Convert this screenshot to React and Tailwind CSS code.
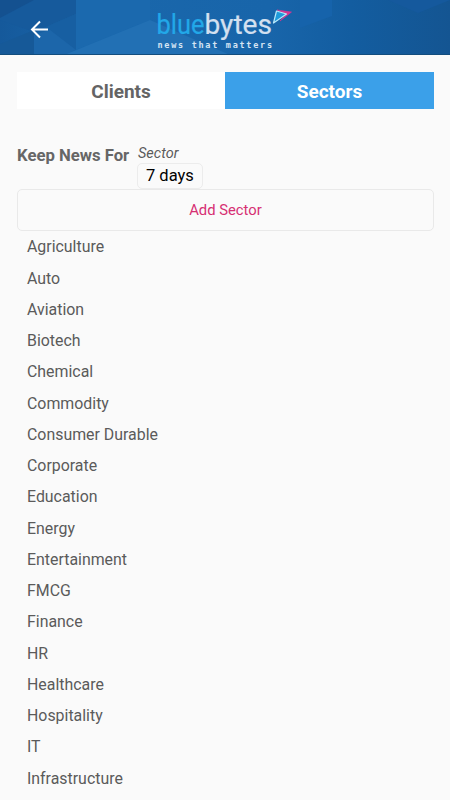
const sectors = [
  "Agriculture", "Auto", "Aviation", "Biotech", "Chemical", "Commodity",
  "Consumer Durable", "Corporate", "Education", "Energy", "Entertainment",
  "FMCG", "Finance", "HR", "Healthcare", "Hospitality", "IT", "Infrastructure",
];

function HeaderBackdrop() {
  return (
    <svg className="absolute inset-0 h-full w-full" viewBox="0 0 450 55" preserveAspectRatio="none" aria-hidden="true">
      <defs>
        <linearGradient id="base" x1="0" x2="1" y1="0" y2="0">
          <stop offset="0" stopColor="#15599b" />
          <stop offset="0.2" stopColor="#1a67ab" />
          <stop offset="0.6" stopColor="#1865aa" />
          <stop offset="0.78" stopColor="#135da0" />
          <stop offset="1" stopColor="#145592" />
        </linearGradient>
      </defs>
      <rect width="450" height="55" fill="url(#base)" />
      <path d="M0 0H76V14L34 32L0 20Z" fill="#165a9c" />
      <path d="M0 0H34L0 18Z" fill="#145190" />
      <path d="M34 32L76 14V50L33 55Z" fill="#175fa2" />
      <path d="M0 55V44L34 30V55Z" fill="#165998" />
      <path d="M34 55V35L50 30L76 50L64 55Z" fill="#1c66aa" />
      <path d="M76 0H150V20L76 50Z" fill="#1b69ae" />
      <path d="M64 55L150 20L230 55Z" fill="#2270b4" />
      <path d="M300 0H332V16L300 28Z" fill="#1663ab" />
      <path d="M388 0H450L418 13Z" fill="#15599d" />
      <rect y="54" width="450" height="1" fill="#134d7d" />
    </svg>
  );
}

function Logo() {
  return (
    <svg className="relative ml-[107px] h-[55px] w-[140px]" viewBox="155 0 140 55">
      <text x="156.500" y="34" textLength="48" lengthAdjust="spacingAndGlyphs" fill="#22a8e8" stroke="#22a8e8" strokeWidth="0.200" className="font-['Roboto'] text-[28px]">blue</text>
      <text x="204.500" y="34" textLength="67.500" lengthAdjust="spacingAndGlyphs" fill="#d3e0f0" stroke="#d3e0f0" strokeWidth="0.200" className="font-['Roboto'] text-[28px]">bytes</text>
      <text x="157.500" y="48" textLength="114.500" lengthAdjust="spacing" fill="#d5e4f3" className="font-['DejaVu_Sans_Mono'] text-[8.500px] font-bold">news that matters</text>
      <path d="M277 10L291.500 12L280 21L286.500 14Z" fill="#d63591" stroke="#d63591" strokeWidth="0.600" />
      <path d="M276.500 11L286.500 14L273.500 23Z" fill="#1f9bdc" stroke="#b9e8fa" strokeWidth="1.200" strokeLinejoin="round" />
    </svg>
  );
}

export default function App() {
  return (
    <div className="h-[800px] w-[450px] overflow-hidden bg-[#fafafa] font-['Roboto',sans-serif] text-[#5b5b5b]">
      <header className="relative flex h-[55px] items-center">
        <HeaderBackdrop />
        <button className="relative ml-[28px] h-6 w-5" aria-label="Back">
          <svg className="mt-1 h-5 w-5" viewBox="0 0 20 20" fill="none" stroke="#fff" strokeWidth="2">
            <path d="M20 9.500H4M12 1.500L4 9.500L12 17.500" />
          </svg>
        </button>
        <Logo />
      </header>
      <main className="px-4 pt-[17px]">
        <nav className="ml-px flex h-[37px] w-[417px] text-[19px] font-bold">
          <button className="w-[208px] bg-white pt-[3px] text-[#646464]">Clients</button>
          <button className="w-[209px] bg-[#3ba0e9] pt-[3px] text-white">Sectors</button>
        </nav>
        <section className="ml-px flex h-[80px] pt-[36px]">
          <h2 className="w-[120px] pt-px text-[16.700px] leading-[20px] font-bold whitespace-nowrap text-[#666]">Keep News For</h2>
          <div>
            <p className="h-[18px] pl-px text-[14.500px] leading-[18px] italic">Sector</p>
            <div className="flex h-[26px] w-[66px] items-center rounded-[5px] border border-[#ececec] pt-px pl-[8px] text-[16.500px] text-black">7 days</div>
          </div>
        </section>
        <button className="ml-px block h-[42px] w-[417px] rounded-[5px] border border-[#e9e9e9] pt-px text-[14.800px] text-[#d62f73]">Add Sector</button>
        <ul className="pt-[0.300px] pl-[11px]">
          {sectors.map((sector) => (
            <li key={sector} className="h-[31.260px] text-[15.900px] leading-[32px]">{sector}</li>
          ))}
        </ul>
      </main>
    </div>
  );
}
